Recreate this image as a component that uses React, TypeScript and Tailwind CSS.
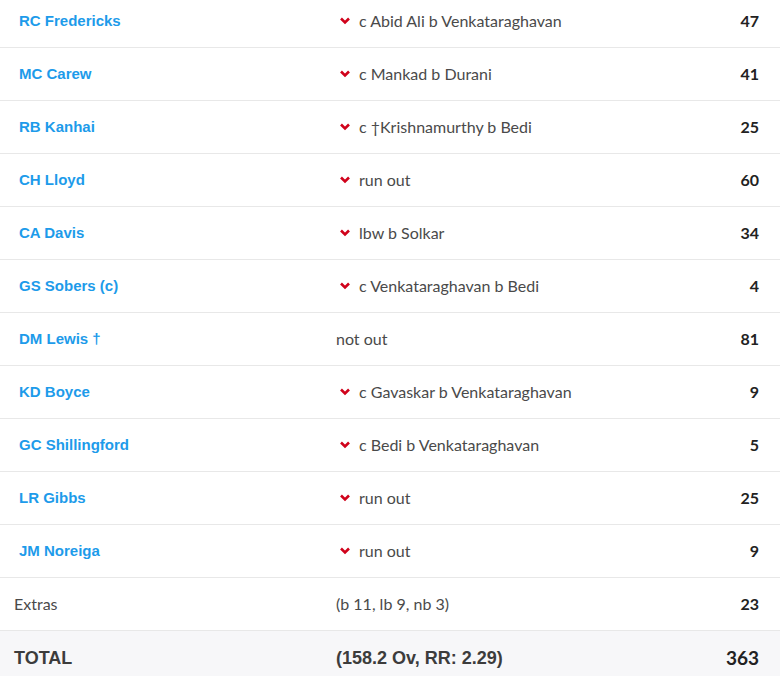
import React from "react";

interface Batter {
  name: string;
  dismissal: string;
  runs: number;
  out: boolean;
}

const batters: Batter[] = [
  { name: "RC Fredericks", dismissal: "c Abid Ali b Venkataraghavan", runs: 47, out: true },
  { name: "MC Carew", dismissal: "c Mankad b Durani", runs: 41, out: true },
  { name: "RB Kanhai", dismissal: "c †Krishnamurthy b Bedi", runs: 25, out: true },
  { name: "CH Lloyd", dismissal: "run out", runs: 60, out: true },
  { name: "CA Davis", dismissal: "lbw b Solkar", runs: 34, out: true },
  { name: "GS Sobers (c)", dismissal: "c Venkataraghavan b Bedi", runs: 4, out: true },
  { name: "DM Lewis †", dismissal: "not out", runs: 81, out: false },
  { name: "KD Boyce", dismissal: "c Gavaskar b Venkataraghavan", runs: 9, out: true },
  { name: "GC Shillingford", dismissal: "c Bedi b Venkataraghavan", runs: 5, out: true },
  { name: "LR Gibbs", dismissal: "run out", runs: 25, out: true },
  { name: "JM Noreiga", dismissal: "run out", runs: 9, out: true },
];

const Chevron = () => (
  <svg width="10" height="8" viewBox="0 0 10 8" className="mr-[9px] shrink-0">
    <path d="M1 1.5 L5 5.5 L9 1.5" fill="none" stroke="#d0021b" strokeWidth="2.6" />
  </svg>
);

const App: React.FC = () => {
  return (
    <div className="w-[780px] h-[676px] overflow-hidden bg-white text-[#4a4a4a] font-['Lato',sans-serif]">
      <div className="-mt-[5px]">
        {batters.map((b) => (
          <div key={b.name} className="flex items-center h-[53px] border-b border-[#e8e8e8]">
            <div className="w-[336px] pl-[19px] text-[15px] font-bold text-[#1d9bea] font-['Liberation_Sans',sans-serif]">
              {b.name}
            </div>
            <div className="flex-1 flex items-center text-[16px] text-[#4a4a4a]">
              {b.out ? (
                <span className="flex items-center pl-[4px]">
                  <Chevron />
                  {b.dismissal}
                </span>
              ) : (
                <span>{b.dismissal}</span>
              )}
            </div>
            <div className="pr-[21px] text-[16px] font-bold text-[#222]">{b.runs}</div>
          </div>
        ))}

        {/* Extras */}
        <div className="flex items-center h-[53px] border-b border-[#e8e8e8]">
          <div className="w-[336px] pl-[14px] text-[16px]">Extras</div>
          <div className="flex-1 text-[16px]">(b 11, lb 9, nb 3)</div>
          <div className="pr-[21px] text-[16px] font-bold text-[#222]">23</div>
        </div>

        {/* Total */}
        <div className="flex items-center h-[56px] bg-[#f7f7f9] pb-[2px]">
          <div className="w-[336px] pl-[14px] text-[18px] font-bold font-['Liberation_Sans',sans-serif] text-[#3c3c3c]">TOTAL</div>
          <div className="flex-1 text-[18px] font-bold font-['Liberation_Sans',sans-serif] text-[#3c3c3c]">(158.2 Ov, RR: 2.29)</div>
          <div className="pr-[21px] text-[19px] font-bold text-[#222]">363</div>
        </div>
      </div>
    </div>
  );
};

export default App;
